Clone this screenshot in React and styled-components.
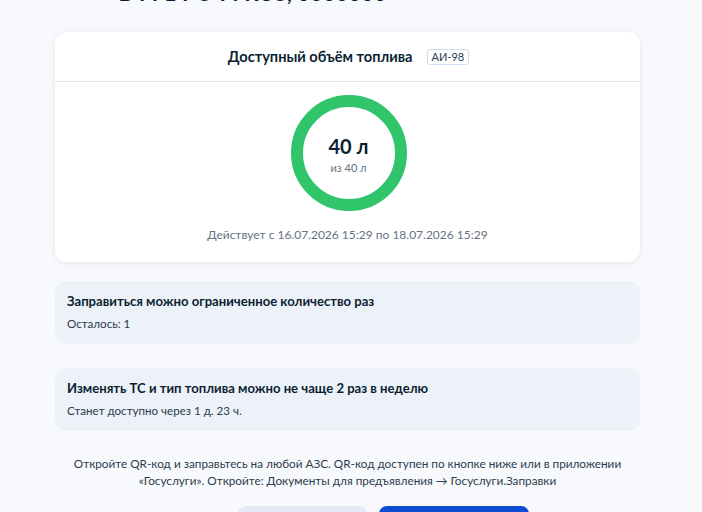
import React from "react";
import styled, { createGlobalStyle } from "styled-components";

const GlobalStyle = createGlobalStyle`
  html, body {
    margin: 0;
    padding: 0;
    background: #f7f9fd;
    overflow: hidden;
  }
  body {
    font-family: 'Lato', 'Noto Sans', sans-serif;
    color: #0b1f33;
  }
  * { box-sizing: border-box; }
`;

const Page = styled.div`
  width: 585px;
  margin-left: 55px;
  display: flex;
  flex-direction: column;
`;

const Heading = styled.h1`
  margin: -21px 0 0;
  padding-right: 190px;
  height: 53px;
  font-size: 22px;
  line-height: 28px;
  font-weight: 700;
  text-align: center;
  color: #0b1f33;
`;

const Card = styled.section`
  background: #fff;
  border-radius: 12px;
  box-shadow: 0 1px 6px rgba(11, 31, 51, 0.08);
  overflow: hidden;
`;

const CardHeader = styled.div`
  height: 50px;
  display: flex;
  align-items: center;
  justify-content: center;
  gap: 14px;
  border-bottom: 1px solid #e3e6ea;
  padding-left: 2px;
`;

const CardTitle = styled.h2`
  margin: 0;
  font-size: 14.6px;
  font-weight: 700;
  color: #0b1f33;
`;

const Badge = styled.span`
  font-size: 11px;
  line-height: 14px;
  padding: 0 4px;
  border: 1px solid #cfdcf5;
  border-radius: 3px;
  color: #2b3b4d;
`;

const CardBody = styled.div`
  display: flex;
  flex-direction: column;
  align-items: center;
  padding: 13px 0 19px;
`;

const Ring = styled.div`
  position: relative;
  width: 116px;
  height: 116px;
  margin-left: 2px;
`;

const RingText = styled.div`
  position: absolute;
  inset: 0;
  display: flex;
  flex-direction: column;
  align-items: center;
  justify-content: center;
  gap: 3px;
  padding-top: 3px;
`;

const Volume = styled.div`
  font-size: 20px;
  font-weight: 700;
  line-height: 24px;
  color: #0b1f33;
`;

const Total = styled.div`
  font-size: 11px;
  line-height: 14px;
  color: #66727f;
`;

const Validity = styled.div`
  margin-top: 16px;
  font-size: 12px;
  line-height: 16px;
  color: #66727f;
`;

const Notice = styled.div`
  margin-top: ${(p) => p.$gap}px;
  background: #edf1f8;
  border-radius: 12px;
  padding: 10px 12px 11px;
`;

const NoticeTitle = styled.div`
  font-size: 13.1px;
  line-height: 20px;
  font-weight: 700;
  color: #0b1f33;
`;

const NoticeText = styled.div`
  margin-top: 4px;
  font-size: 11.6px;
  line-height: 18px;
  color: #2b3b4d;
`;

const Hint = styled.p`
  margin: 24px 0 0;
  font-size: 11.75px;
  line-height: 17px;
  text-align: center;
  color: #2b3b4d;
`;

const Actions = styled.div`
  margin-top: 17px;
  display: flex;
  justify-content: center;
  gap: 12px;
  padding-left: 72px;
`;

const Button = styled.button`
  height: 40px;
  width: ${(p) => p.$w}px;
  border: none;
  border-radius: 8px;
  font: inherit;
  font-size: 14px;
  background: ${(p) => (p.$primary ? "#0d4cd3" : "#e4ebf7")};
  color: ${(p) => (p.$primary ? "#fff" : "#0d4cd3")};
`;

const ProgressRing = () => (
  <Ring>
    <svg width="116" height="116" viewBox="0 0 116 116">
      <circle cx="58" cy="58" r="52" fill="none" stroke="#30c46b" strokeWidth="12" />
    </svg>
    <RingText>
      <Volume>40 л</Volume>
      <Total>из 40 л</Total>
    </RingText>
  </Ring>
);

export default function App() {
  return (
    <>
      <GlobalStyle />
      <Page>
        <Heading>В 771 РО 77RUS, 0000000</Heading>
        <Card>
          <CardHeader>
            <CardTitle>Доступный объём топлива</CardTitle>
            <Badge>АИ-98</Badge>
          </CardHeader>
          <CardBody>
            <ProgressRing />
            <Validity>Действует с 16.07.2026 15:29 по 18.07.2026 15:29</Validity>
          </CardBody>
        </Card>
        <Notice $gap={19}>
          <NoticeTitle>Заправиться можно ограниченное количество раз</NoticeTitle>
          <NoticeText>Осталось: 1</NoticeText>
        </Notice>
        <Notice $gap={24}>
          <NoticeTitle>Изменять ТС и тип топлива можно не чаще 2 раз в неделю</NoticeTitle>
          <NoticeText>Станет доступно через 1 д. 23 ч.</NoticeText>
        </Notice>
        <Hint>
          Откройте QR-код и заправьтесь на любой АЗС. QR-код доступен по кнопке ниже или в приложении
          <br />
          «Госуслуги». Откройте: Документы для предъявления → Госуслуги.Заправки
        </Hint>
        <Actions>
          <Button $w={129}>Назад</Button>
          <Button $w={150} $primary>Открыть QR-код</Button>
        </Actions>
      </Page>
    </>
  );
}
